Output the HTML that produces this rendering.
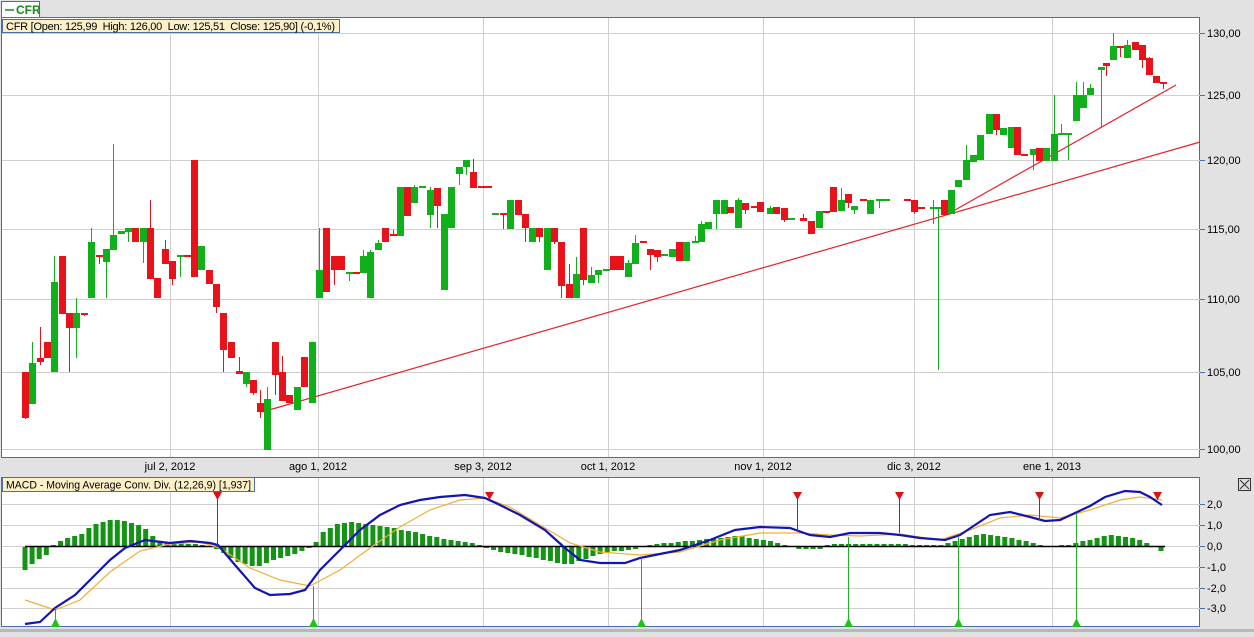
<!DOCTYPE html>
<html><head><meta charset="utf-8"><style>
body{margin:0;width:1254px;height:637px;background:#e2e2e2;overflow:hidden;font-family:"Liberation Sans",sans-serif;}
svg{position:absolute;left:0;top:0}
</style></head><body>
<svg id="s" width="1254" height="637" xmlns="http://www.w3.org/2000/svg" font-family="Liberation Sans, sans-serif" font-size="11">
<rect x="0" y="0" width="1254" height="637" fill="#e2e2e2"/>
<rect x="1.5" y="17.5" width="1198" height="440" fill="#fff" stroke="#4a6ea9"/>
<rect x="1.5" y="477.5" width="1198" height="149" fill="#fff" stroke="#4a6ea9"/>
<g id="grid" stroke="#cfcfcf" stroke-width="1"></g>
<g id="lbl" fill="#000"></g>
<line x1="262" y1="412" x2="1200" y2="142" stroke="#e8202a" stroke-width="1.2"/>
<line x1="948" y1="214" x2="1176" y2="85" stroke="#e8202a" stroke-width="1.2"/>
<g id="c"></g>
<g id="m"></g>
<rect x="1.5" y="1.5" width="38" height="16" fill="#fff" stroke="#4a6ea9"/>
<line x1="5" y1="10" x2="14" y2="10" stroke="#1a8a1a" stroke-width="1.5"/>
<text x="16" y="14" fill="#1a8a1a" font-weight="bold" font-size="12">CFR</text>
<rect x="2.5" y="19.5" width="337" height="13" fill="#fcf0c8" stroke="#4a6ea9"/>
<text x="6" y="30" font-size="11" textLength="329" lengthAdjust="spacing" style="white-space:pre">CFR [Open: 125,99  High: 126,00  Low: 125,51  Close: 125,90] (-0,1%)</text>
<rect x="2.5" y="477.5" width="252" height="14" fill="#fcf0c8" stroke="#4a6ea9"/>
<text x="6" y="488.5" font-size="11" textLength="245" lengthAdjust="spacingAndGlyphs">MACD - Moving Average Conv. Div. (12,26,9) [1,937]</text>
<rect x="1238.5" y="478.5" width="12" height="12" fill="#ddd" stroke="#333"/>
<path d="M1240 480L1249 489M1249 480L1240 489" stroke="#333" stroke-width="1"/>
<rect x="0" y="629" width="1254" height="3" fill="#b8b8b8"/>
</svg>
<script>
const NS="http://www.w3.org/2000/svg";
function el(p,t,a){const e=document.createElementNS(NS,t);for(const k in a)e.setAttribute(k,a[k]);p.appendChild(e);return e;}
const G=document.getElementById('grid'),L=document.getElementById('lbl'),C=document.getElementById('c'),M=document.getElementById('m');
[[33,'130,00'],[95,'125,00'],[160,'120,00'],[229,'115,00'],[299,'110,00'],[372,'105,00'],[449,'100,00']].forEach(([y,t])=>{
 el(G,'line',{x1:2,y1:y+.5,x2:1200,y2:y+.5});el(G,'line',{x1:1200,y1:y+.5,x2:1205,y2:y+.5,stroke:'#4a6ea9'});
 el(L,'text',{x:1207,y:y+4}).textContent=t;});
[[504,'2,0'],[525,'1,0'],[546,'0,0'],[567,'-1,0'],[588,'-2,0'],[608,'-3,0']].forEach(([y,t])=>{
 el(G,'line',{x1:2,y1:y+.5,x2:1200,y2:y+.5});el(G,'line',{x1:1200,y1:y+.5,x2:1205,y2:y+.5,stroke:'#4a6ea9'});
 el(L,'text',{x:1207,y:y+4}).textContent=t;});
[[170,'jul 2, 2012'],[318,'ago 1, 2012'],[483,'sep 3, 2012'],[608,'oct 1, 2012'],[763,'nov 1, 2012'],[914,'dic 3, 2012'],[1052,'ene 1, 2013']].forEach(([x,t])=>{
 el(G,'line',{x1:x+.5,y1:18,x2:x+.5,y2:457});el(G,'line',{x1:x+.5,y1:478,x2:x+.5,y2:626});
 el(L,'text',{x:x,y:470,'text-anchor':'middle'}).textContent=t;});
const R='#e8121a',Gr='#10b01a';
const d=[[22,372,418,372,419,R],[29,363,404,342,404,Gr],[37,358,362,327,365,R],[44,342,358,342,358,R],[51,282,372,256,372,Gr],[59,256,314,256,314,R],[66,313,328,313,372,R],[73,313,328,298,358,Gr],[81,313,315,313,316,R],[88,242,298,228,298,Gr],[96,255,257,255,264,R],[103,249,262,249,298,Gr],[110,235,250,144,250,Gr],[118,231,234,231,234,Gr],[125,228,232,228,242,Gr],[132,228,242,228,242,R],[140,228,242,228,263,Gr],[147,228,279,200,279,R],[154,278,298,278,298,R],[162,249,264,240,264,R],[169,261,279,261,285,R],[177,255,257,255,277,Gr],[184,255,257,255,257,R],[191,160,277,160,277,R],[198,246,270,246,270,Gr],[206,270,284,270,284,R],[213,284,307,284,313,R],[220,313,350,313,372,R],[228,342,358,342,358,R],[236,371,374,357,374,R],[243,372,384,372,387,Gr],[250,380,393,380,395,R],[257,403,412,390,418,R],[264,399,450,387,450,Gr],[272,342,375,342,395,R],[279,372,401,356,401,R],[286,395,403,395,403,R],[294,387,410,387,410,Gr],[301,357,387,357,387,R],[309,342,403,342,403,Gr],[316,270,298,228,298,Gr],[323,228,292,228,292,R],[331,256,270,256,285,R],[338,256,270,256,270,R],[346,272,274,272,281,Gr],[353,272,274,272,274,R],[360,256,273,250,273,Gr],[367,252,298,250,298,Gr],[375,243,250,240,250,Gr],[382,228,242,228,242,R],[390,234,236,230,236,R],[397,187,236,187,236,Gr],[404,187,216,187,216,R],[411,187,203,185,203,Gr],[419,186,188,186,188,Gr],[427,190,215,187,228,Gr],[434,188,206,188,228,R],[441,214,290,214,290,Gr],[448,187,228,187,228,Gr],[456,167,174,167,185,Gr],[463,160,167,160,175,Gr],[470,172,188,159,188,R],[478,186,188,186,188,R],[485,186,188,186,188,R],[492,213,215,213,215,Gr],[500,213,215,213,229,R],[507,200,229,200,229,Gr],[515,200,215,200,215,R],[522,214,228,214,242,R],[529,228,242,228,242,Gr],[536,228,237,228,242,R],[544,228,270,228,270,Gr],[551,228,242,228,244,R],[558,242,286,242,298,R],[566,284,298,264,298,R],[573,274,298,257,298,Gr],[580,228,280,228,285,R],[588,275,283,267,283,Gr],[595,270,275,270,283,Gr],[603,269,271,269,271,Gr],[610,256,270,256,270,R],[617,256,270,256,270,R],[625,263,277,260,277,Gr],[632,243,264,235,264,Gr],[640,241,243,241,243,R],[647,249,255,249,270,R],[654,250,257,250,262,R],[661,254,256,254,256,Gr],[669,249,257,249,257,Gr],[676,242,261,242,261,R],[683,242,261,242,261,Gr],[692,241,243,236,243,Gr],[698,224,242,221,242,Gr],[705,222,229,222,229,Gr],[713,200,214,200,229,Gr],[721,200,214,200,214,Gr],[727,207,213,207,213,R],[735,200,228,198,228,Gr],[742,203,210,203,214,R],[751,206,208,206,208,R],[757,202,212,202,212,R],[767,208,214,206,214,Gr],[773,207,214,207,214,R],[781,208,220,208,222,R],[788,218,220,218,220,Gr],[800,218,221,214,221,R],[808,221,234,221,234,R],[816,211,228,211,228,Gr],[823,211,213,211,213,R],[830,187,212,187,212,R],[838,200,211,188,211,Gr],[845,194,203,194,208,R],[851,206,210,206,214,Gr],[860,199,201,199,201,R],[867,200,214,200,214,Gr],[876,199,201,199,208,Gr],[883,199,201,199,201,Gr],[904,199,201,199,201,R],[911,200,212,200,214,R],[918,207,209,207,209,R],[930,207,209,200,224,Gr],[935,207,209,207,370,Gr],[941,200,215,200,215,R],[948,190,214,190,214,Gr],[955,180,187,180,187,Gr],[963,160,180,145,180,Gr],[970,155,162,155,162,Gr],[977,135,160,135,160,Gr],[986,114,134,114,134,Gr],[993,114,130,114,135,R],[1000,128,135,128,135,Gr],[1008,127,148,127,148,Gr],[1014,127,155,127,155,R],[1021,154,156,154,156,R],[1030,149,155,149,170,Gr],[1036,148,161,148,161,R],[1043,148,161,148,161,Gr],[1051,134,161,95,161,Gr],[1058,133,135,124,135,Gr],[1065,133,135,133,160,Gr],[1073,95,121,82,121,Gr],[1080,95,108,82,108,Gr],[1087,88,95,84,95,Gr],[1098,67,70,67,128,Gr],[1103,63,66,63,76,R],[1110,46,60,33,60,Gr],[1117,46,48,46,57,R],[1124,45,58,40,58,Gr],[1132,42,50,42,50,R],[1139,45,60,45,68,R],[1146,58,75,57,75,R],[1153,76,83,76,83,R],[1160,82,84,82,89,R]];
d.forEach(([x,t,b,wt,wb,c])=>{el(C,'line',{x1:x+3.5,y1:wt,x2:x+3.5,y2:wb,stroke:c});el(C,'rect',{x:x,y:t,width:7,height:Math.max(2,b-t),fill:c});});
const hp=[[25,-23],[32,-17],[40,-12],[47,-8],[54,2],[62,6],[69,8],[76,11],[84,12],[91,20],[98,23],[105,25],[113,26],[120,26],[127,25],[134,22],[142,20],[149,14],[157,6],[164,4],[193,2],[214,0],[222,-5],[236,-14],[257,-20],[271,-14],[293,-8],[308,-2],[315,2],[322,13],[336,22],[350,24],[380,20],[410,15],[440,8],[470,3],[485,0],[495,-4],[520,-8],[545,-13],[570,-18],[590,-10],[610,-5],[635,-2],[645,1],[680,4],[720,8],[740,10],[770,5],[790,0],[800,-2],[820,-2],[830,2],[880,2],[940,1],[950,3],[980,12],[1000,10],[1030,4],[1045,0],[1070,1],[1080,4],[1110,11],[1135,8],[1150,2],[1162,-5]];
function interp(pts,x){for(let i=0;i<pts.length-1;i++){if(x>=pts[i][0]&&x<=pts[i+1][0]){const f=(x-pts[i][0])/(pts[i+1][0]-pts[i][0]);return pts[i][1]+f*(pts[i+1][1]-pts[i][1]);}}return pts[pts.length-1][1];}
for(let x=25;x<=1162;x+=7.1){const v=Math.round(interp(hp,x));if(v===0)continue;el(M,'rect',{x:x-2.5,y:v>0?546-v:547,width:5,height:Math.abs(v),fill:'#139413'});}
el(M,'line',{x1:25,y1:546.5,x2:1165,y2:546.5,stroke:'#000','stroke-width':1.5});
const blue=[[25,624],[40,622],[55,608],[75,595],[95,575],[110,560],[125,548],[145,540],[170,543],[190,541],[210,543],[218,545],[235,565],[255,588],[270,595],[290,594],[305,590],[320,570],[340,550],[360,530],[380,515],[400,505],[420,500],[440,497],[465,495],[485,498],[500,505],[520,515],[545,530],[565,548],[580,560],[600,563],[625,563],[640,558],[680,550],[710,540],[735,530],[760,527],[790,528],[810,535],[830,537],[850,533],[880,533],[900,535],[920,538],[945,540],[960,535],[975,525],[990,515],[1010,512],[1030,517],[1045,521],[1060,520],[1075,513],[1090,506],[1105,497],[1125,491],[1140,492],[1150,497],[1162,505]];
const org=[[25,600],[55,610],[80,600],[110,572],[140,551],[170,544],[200,542],[220,548],[250,568],[280,580],[310,586],[340,570],[370,548],[400,527],[430,510],[460,500],[485,498],[510,507],[540,525],[570,543],[600,552],[640,555],[680,552],[720,540],[760,533],[800,533],[830,535],[860,536],[900,534],[940,540],[970,530],[1000,518],[1030,515],[1060,518],[1090,510],[1120,500],[1140,497],[1162,500]];
el(M,'polyline',{points:org.map(p=>p.join(',')).join(' '),fill:'none',stroke:'#f0b030','stroke-width':1.2});
el(M,'polyline',{points:blue.map(p=>p.join(',')).join(' '),fill:'none',stroke:'#1414b4','stroke-width':2.2});
[[217,546],[489,498],[797,531],[899,533],[1039,520],[1157,500]].forEach(([x,y])=>{el(M,'line',{x1:x+.5,y1:494,x2:x+.5,y2:y,stroke:'#d01010'});el(M,'path',{d:`M${x-4} 492L${x+5} 492L${x+.5} 500Z`,fill:'#e01010'});});
[[55,608],[313,586],[641,558],[848,537],[958,537],[1076,513]].forEach(([x,y])=>{el(M,'line',{x1:x+.5,y1:y,x2:x+.5,y2:626,stroke:'#20b020'});el(M,'path',{d:`M${x-4} 627L${x+5} 627L${x+.5} 618Z`,fill:'#20c020'});});
</script>
</body></html>
